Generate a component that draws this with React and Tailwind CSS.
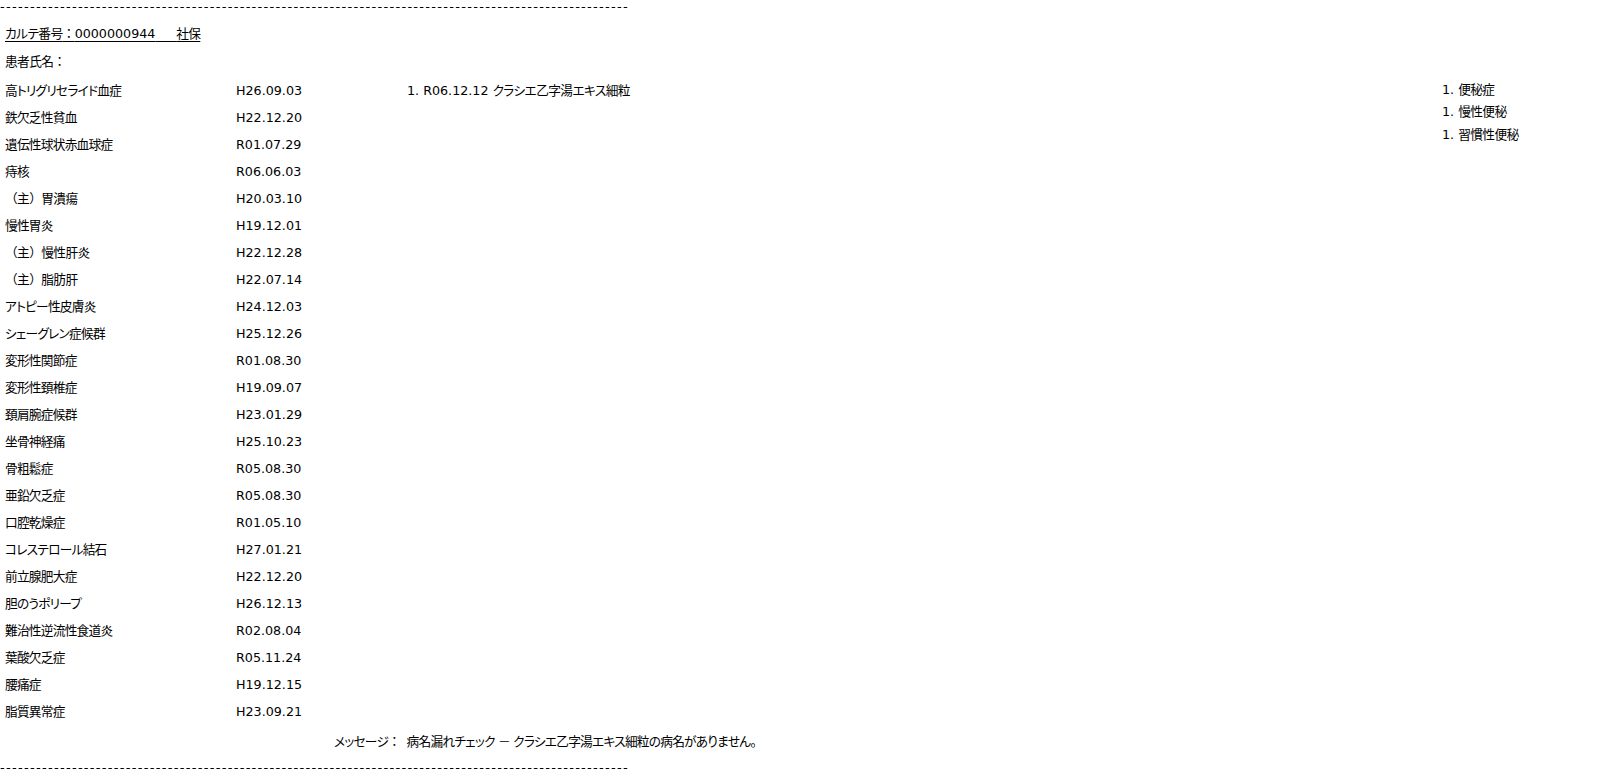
const DISEASES = [
  ['高トリグリセライド血症', 'H26.09.03'],
  ['鉄欠乏性貧血', 'H22.12.20'],
  ['遺伝性球状赤血球症', 'R01.07.29'],
  ['痔核', 'R06.06.03'],
  ['（主）胃潰瘍', 'H20.03.10'],
  ['慢性胃炎', 'H19.12.01'],
  ['（主）慢性肝炎', 'H22.12.28'],
  ['（主）脂肪肝', 'H22.07.14'],
  ['アトピー性皮膚炎', 'H24.12.03'],
  ['シェーグレン症候群', 'H25.12.26'],
  ['変形性関節症', 'R01.08.30'],
  ['変形性頚椎症', 'H19.09.07'],
  ['頚肩腕症候群', 'H23.01.29'],
  ['坐骨神経痛', 'H25.10.23'],
  ['骨粗鬆症', 'R05.08.30'],
  ['亜鉛欠乏症', 'R05.08.30'],
  ['口腔乾燥症', 'R01.05.10'],
  ['コレステロール結石', 'H27.01.21'],
  ['前立腺肥大症', 'H22.12.20'],
  ['胆のうポリープ', 'H26.12.13'],
  ['難治性逆流性食道炎', 'R02.08.04'],
  ['葉酸欠乏症', 'R05.11.24'],
  ['腰痛症', 'H19.12.15'],
  ['脂質異常症', 'H23.09.21'],
]

const SYMPTOMS = ['便秘症', '慢性便秘', '習慣性便秘']

const DASHES = '-'.repeat(105)

// japanese runs: proportional kana, a little tighter
function Jp({ children }) {
  return <span className="tracking-[-0.6px]">{children}</span>
}

function Full({ children }) {
  return <span className="[font-feature-settings:normal]">{children}</span>
}

function Name({ text }) {
  if (text.startsWith('（主）')) {
    return (
      <Jp>
        <Full>（主）</Full>
        {text.slice(3)}
      </Jp>
    )
  }
  return <span className="tracking-[-0.75px]">{text}</span>
}

export default function App() {
  return (
    <div className="min-h-screen w-[1614px] bg-white text-black text-[12.7px] [font-family:'DejaVu_Sans','Noto_Sans_CJK_JP',sans-serif] [font-feature-settings:'palt']">
      <div className="h-[14px] leading-[14px] text-[13px] tracking-[1.3px] whitespace-pre">{DASHES}</div>

      <div className="mt-[10px] h-[20px] leading-[20px] pl-[5px]">
        <span className="underline underline-offset-[3px] whitespace-pre">
          <Jp>カルテ番号<Full>：</Full></Jp>0000000944{'　  '}<Jp>社保</Jp>
        </span>
      </div>

      <div className="mt-[8px] h-[20px] leading-[20px] pl-[5px]">
        <Jp>患者氏名<Full>：</Full></Jp>
      </div>

      <div className="mt-[4.5px] grid grid-cols-[231px_171px_1035px_1fr] pl-[5px]">
        <div className="flex flex-col">
          {DISEASES.map(([name]) => (
            <div key={name} className="h-[27px] leading-[27px] whitespace-nowrap">
              <Name text={name} />
            </div>
          ))}
        </div>
        <div className="flex flex-col">
          {DISEASES.map(([name, date]) => (
            <div key={name} className="h-[27px] leading-[27px]">{date}</div>
          ))}
        </div>
        <div>
          <div className="h-[27px] leading-[27px] whitespace-pre">
            1. R06.12.12 <Jp>クラシエ乙字湯エキス細粒</Jp>
          </div>
        </div>
        <div className="flex flex-col pt-[2px]">
          {SYMPTOMS.map((s) => (
            <div key={s} className="h-[22.5px] leading-[22.5px] whitespace-pre">
              1. <Jp>{s}</Jp>
            </div>
          ))}
        </div>
      </div>

      <div className="mt-[7.5px] h-[20px] leading-[20px] pl-[334px] whitespace-pre">
        <span className="tracking-[-0.75px]">
          メッセージ<Full>：</Full>  病名漏れチェック <Full>－</Full> クラシエ乙字湯エキス細粒の病名がありません。
        </span>
      </div>

      <div className="mt-[9px] h-[14px] leading-[14px] text-[13px] tracking-[1.3px] whitespace-pre">{DASHES}</div>
    </div>
  )
}
